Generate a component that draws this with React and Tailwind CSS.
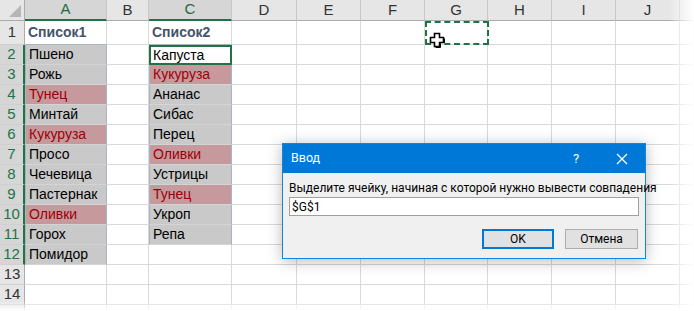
import React from 'react';

const colA = ['Пшено', 'Рожь', 'Тунец', 'Минтай', 'Кукуруза', 'Просо', 'Чечевица', 'Пастернак', 'Оливки', 'Горох', 'Помидор'];
const colC = ['Капуста', 'Кукуруза', 'Ананас', 'Сибас', 'Перец', 'Оливки', 'Устрицы', 'Тунец', 'Укроп', 'Репа'];
const matchA = ['Тунец', 'Кукуруза', 'Оливки'];
const matchC = ['Кукуруза', 'Оливки', 'Тунец'];
const letters = ['A', 'B', 'C', 'D', 'E', 'F', 'G', 'H', 'I', 'J', ''];

function HeaderCell({ label, selected }) {
  return (
    <div
      className={
        'flex items-center justify-center border-r border-[#c8c8c8] text-[15px] ' +
        (selected
          ? 'bg-[#d6d6d6] text-[#1e6b41] border-b-2 border-b-[#217346]'
          : 'bg-[#e6e6e6] text-[#333] border-b border-b-[#ababab]')
      }
    >
      {label}
    </div>
  );
}

function RowHeader({ n, selected }) {
  return (
    <div
      className={
        'flex items-center justify-center border-b border-[#d0d0d0] text-[15px] ' +
        (selected
          ? 'bg-[#d6d6d6] text-[#217346] border-r-2 border-r-[#217346]'
          : 'bg-[#e6e6e6] text-[#333] border-r border-r-[#ababab]')
      }
    >
      {n}
    </div>
  );
}

function Cell({ text, kind, bottom, active }) {
  // kind: 'plain' | 'gray' | 'bad' | 'head'
  let cls = 'flex items-center px-[3px] border-r border-b border-[#d9d9d9] text-[14px] text-black whitespace-nowrap';
  if (kind === 'gray') cls = 'flex items-center px-[3px] bg-[#c9c9c9] border-b border-b-[#d4d4d4] border-x border-x-[#a9b3c4] text-[14px] text-black whitespace-nowrap';
  if (kind === 'bad') cls = 'flex items-center px-[3px] bg-[#c6999d] border-b border-b-[#d4d4d4] border-x border-x-[#a9b3c4] text-[14px] text-[#9c0006] whitespace-nowrap';
  if (kind === 'head') cls = 'flex items-center px-[3px] border-r border-b border-[#d9d9d9] border-b-[#a9b3c4] text-[14px] font-bold text-[#44546a] whitespace-nowrap';
  if (active) cls = 'flex items-center px-[2px] bg-white border-2 border-[#217346] text-[14px] text-black whitespace-nowrap';
  if (bottom && kind !== 'plain') cls += ' border-b-[#a9b3c4]';
  return <div className={cls}>{text}</div>;
}

function Cursor() {
  return (
    <svg width="17" height="17" viewBox="0 0 17 17" className="absolute left-[429px] top-[32px]">
      <path
        d="M5.5 1.5h5v4h4v5h-4v4h-5v-4h-4v-5h4z"
        fill="#fff"
        stroke="#000"
        strokeWidth="1.6"
      />
      <path d="M11.5 11.5v4h-5M15.5 6.5v4.5" fill="none" stroke="#000" strokeWidth="1" />
    </svg>
  );
}

function Dialog() {
  return (
    <div className="absolute left-[282px] top-[143px] w-[364px] h-[116px] flex flex-col bg-[#f0f0f0] border border-[#1883d7] shadow-[0_2px_14px_rgba(0,0,0,0.28)] font-['Roboto',sans-serif] text-[12px]">
      <div className="h-[29px] bg-[#0078d7] flex items-center pl-[8px] text-white">
        <span className="flex-1 text-[12.5px]">Ввод</span>
        <span className="w-[12px] text-center mr-[33px] text-[13px]">?</span>
        <svg width="14" height="14" viewBox="0 0 14 14" className="mr-[16px]">
          <path d="M2 2L12 12M12 2L2 12" stroke="#fff" strokeWidth="1.3" />
        </svg>
      </div>
      <div className="flex flex-col px-[6px] pt-[8px]">
        <div className="h-[15px] leading-[15px] text-black whitespace-nowrap">
          Выделите ячейку, начиная с которой нужно вывести совпадения
        </div>
        <div className="mt-[1px] h-[19px] bg-white border border-[#a0a0a0] flex items-center px-[2px] text-black">
          $G$1
        </div>
        <div className="mt-[13px] flex justify-end gap-[11px]">
          <div className="w-[72px] h-[20px] flex items-center justify-center bg-[#e1e1e1] border-2 border-[#0078d7] text-black">
            OK
          </div>
          <div className="w-[73px] h-[20px] flex items-center justify-center bg-[#e1e1e1] border border-[#adadad] text-black mr-px">
            Отмена
          </div>
        </div>
      </div>
    </div>
  );
}

export default function App() {
  const rows = Array.from({ length: 15 }, (_, i) => i + 1);
  return (
    <div className="relative w-[694px] h-[311px] overflow-hidden bg-white font-['Liberation_Sans',Arial,sans-serif]">
      <div className="grid grid-cols-[25px_82px_42px_83px_65px_64px_64px_63px_64px_64px_64px_1fr] grid-rows-[21px_24px_repeat(14,20px)]">
        {/* corner */}
        <div className="relative bg-[#e6e6e6] border-r border-b border-[#ababab]">
          <div className="absolute right-[3px] bottom-[3px] w-0 h-0 border-l-[12px] border-l-transparent border-b-[12px] border-b-[#b6b6b6]" />
        </div>
        {letters.map((l, i) => (
          <HeaderCell key={i} label={l} selected={l === 'A' || l === 'C'} />
        ))}

        {rows.map((r) => {
          const selected = r >= 2 && r <= 12;
          const cells = [];
          for (let c = 0; c < 11; c++) {
            let text = '';
            let kind = 'plain';
            let bottom = false;
            let active = false;
            if (c === 0) {
              if (r === 1) { text = 'Список1'; kind = 'head'; }
              else if (r <= 12) {
                text = colA[r - 2];
                kind = matchA.includes(text) ? 'bad' : 'gray';
                bottom = r === 12;
              }
            }
            if (c === 2) {
              if (r === 1) { text = 'Список2'; kind = 'head'; }
              else if (r <= 11) {
                text = colC[r - 2];
                kind = matchC.includes(text) && r !== 2 ? 'bad' : 'gray';
                bottom = r === 11;
                if (r === 2) active = true;
              }
            }
            cells.push(<Cell key={c} text={text} kind={kind} bottom={bottom} active={active} />);
          }
          return (
            <React.Fragment key={r}>
              <RowHeader n={r <= 14 ? r : ''} selected={selected} />
              {cells}
            </React.Fragment>
          );
        })}
      </div>

      {/* copy marquee on G1 */}
      <div className="absolute left-[425px] top-[21px] w-[64px] h-[24px] border-2 border-dashed border-[#217346]" />
      <Cursor />

      {/* edge fades */}
      <div className="absolute right-0 top-0 w-[26px] h-full bg-gradient-to-r from-white/0 to-white" />
      <div className="absolute left-0 bottom-0 w-full h-[10px] bg-gradient-to-b from-white/0 to-white" />

      <Dialog />
    </div>
  );
}
